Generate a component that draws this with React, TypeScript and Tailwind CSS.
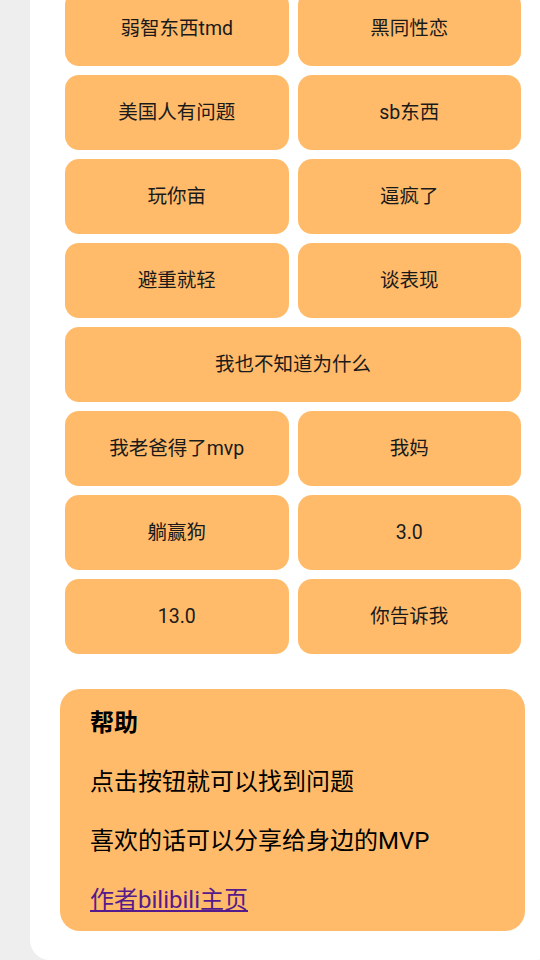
import React from 'react';

const rows: string[][] = [
  ['弱智东西tmd', '黑同性恋'],
  ['美国人有问题', 'sb东西'],
  ['玩你亩', '逼疯了'],
  ['避重就轻', '谈表现'],
  ['我也不知道为什么'],
  ['我老爸得了mvp', '我妈'],
  ['躺赢狗', '3.0'],
  ['13.0', '你告诉我'],
];

const font = { fontFamily: 'Roboto, "Noto Sans CJK SC", sans-serif' };

const App: React.FC = () => {
  return (
    <div className="w-[540px] h-[960px] overflow-hidden bg-[#eeeeee]" style={font}>
      <div className="ml-[30px] w-[526px] h-[960px] bg-white rounded-b-[20px] flex flex-col">
        <div className="-mt-[9px] px-[35px] flex flex-col gap-[9px]">
          {rows.map((row, i) => (
            <div key={i} className="flex gap-[9px]">
              {row.map((label) => (
                <button
                  key={label}
                  className="flex-1 h-[75px] rounded-[14px] bg-[#ffbb6a] text-[19.5px] text-[#1a1a1a] flex items-center justify-center"
                >
                  {label}
                </button>
              ))}
            </div>
          ))}
        </div>

        <div className="mt-[35px] ml-[30px] mr-[31px] rounded-[20px] bg-[#ffbb6a] pl-[30px] pr-4 pt-[17px] pb-[13px] text-[24px] leading-[35px] text-black">
          <h3 className="font-bold">帮助</h3>
          <p className="mt-[24px]">点击按钮就可以找到问题</p>
          <p className="mt-[24px]">喜欢的话可以分享给身边的MVP</p>
          <p className="mt-[24px]">
            <a href="#" className="text-[#551a8b] underline">作者bilibili主页</a>
          </p>
        </div>
      </div>
    </div>
  );
};

export default App;
